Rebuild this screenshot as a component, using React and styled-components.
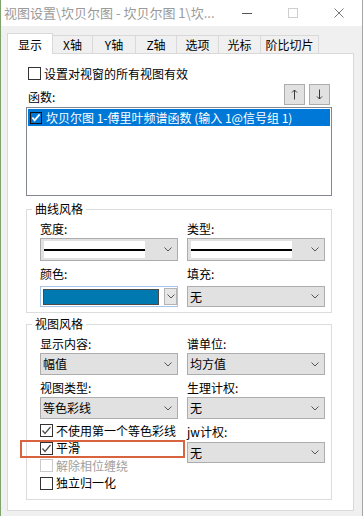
import React from "react";
import styled, { createGlobalStyle } from "styled-components";

const GlobalStyle = createGlobalStyle`
  html, body {
    margin: 0;
    padding: 0;
    background: #f0f0f0;
  }
  body {
    font-family: "Noto Sans CJK SC", "Noto Sans", sans-serif;
    font-size: 12px;
    color: #000;
  }
  * {
    box-sizing: border-box;
  }
`;

const Window = styled.div`
  width: 363px;
  height: 516px;
  display: flex;
  flex-direction: column;
  background: #f0f0f0;
  border-left: 1px solid #7da46c;
  border-right: 1px solid #a5a5a5;
  overflow: hidden;
`;

const TitleBar = styled.div`
  height: 26px;
  flex: none;
  display: flex;
  align-items: center;
  background: #fff;
`;

const Title = styled.div`
  flex: 1;
  min-width: 0;
  padding-left: 3px;
  font-size: 13px;
  line-height: 26px;
  color: #9a9a9a;
  white-space: nowrap;
`;

const CaptionButton = styled.div`
  width: 46px;
  height: 26px;
  flex: none;
  display: flex;
  align-items: center;
  justify-content: center;
`;

const Body = styled.div`
  flex: 1;
  display: flex;
  flex-direction: column;
  padding: 7px 8px 5px 6px;
`;

const TabRow = styled.div`
  height: 21px;
  display: flex;
  align-items: flex-end;
  position: relative;
  z-index: 1;
  margin-bottom: -1px;
`;

const Tab = styled.div`
  width: ${(p) => p.$w}px;
  height: ${(p) => (p.$active ? 21 : 19)}px;
  margin-left: ${(p) => (p.$first ? 0 : -1)}px;
  padding-top: ${(p) => (p.$active ? 3 : 1)}px;
  border: 1px solid #d9d9d9;
  border-bottom: ${(p) => (p.$active ? "none" : "1px solid #d9d9d9")};
  background: ${(p) => (p.$active ? "#fff" : "#f0f0f0")};
  line-height: 16px;
  text-align: center;
  white-space: nowrap;
  position: relative;
  z-index: ${(p) => (p.$active ? 2 : 1)};
`;

const Panel = styled.div`
  flex: 1;
  display: flex;
  flex-direction: column;
  background: #fff;
  border: 1px solid #d9d9d9;
  padding: 13px 21px 0 18px;
`;

const CheckRow = styled.div`
  height: ${(p) => p.$h || 13}px;
  display: flex;
  align-items: center;
  gap: 3px;
  padding-left: ${(p) => p.$indent || 0}px;
  line-height: 16px;
  white-space: nowrap;
  color: ${(p) => (p.$disabled ? "#a0a0a0" : "#000")};
  position: relative;
`;

const Highlight = styled.div`
  position: absolute;
  left: -20px;
  top: 0;
  width: 165px;
  height: 18px;
  border: 2px solid #d9623f;
  pointer-events: none;
`;

const Box = styled.span`
  width: 13px;
  height: 13px;
  flex: none;
  border: 1px solid ${(p) => (p.$disabled ? "#cacaca" : "#333")};
  background: #fff;
  display: flex;
  align-items: center;
  justify-content: center;
`;

const FuncRow = styled.div`
  margin-top: 4px;
  height: 21px;
  display: flex;
  align-items: flex-end;
  justify-content: space-between;
`;

const FuncLabel = styled.div`
  padding-left: 2px;
  line-height: 16px;
`;

const ArrowGroup = styled.div`
  display: flex;
  gap: 4px;
  margin-right: 2px;
  align-self: stretch;
`;

const SmallButton = styled.div`
  width: 21px;
  height: 21px;
  border: 1px solid #adadad;
  background: #e1e1e1;
  display: flex;
  align-items: center;
  justify-content: center;
`;

const ListBox = styled.div`
  margin-top: 2px;
  height: 89px;
  border: 1px solid #828790;
  padding: 1px;
`;

const ListItem = styled.div`
  height: 17px;
  display: flex;
  align-items: center;
  gap: 4px;
  padding-left: 2px;
  background: #0078d7;
  color: #fff;
  line-height: 16px;
  white-space: nowrap;
`;

const ListCheck = styled.span`
  width: 12px;
  height: 12px;
  flex: none;
  border: 1.5px solid #101010;
  display: flex;
  align-items: center;
  justify-content: center;
`;

const Group = styled.fieldset`
  margin: ${(p) => p.$top}px 0 0;
  border: 1px solid #dcdcdc;
  padding: 4px 6px ${(p) => p.$bottom}px 13px;
  min-width: 0;
`;

const Legend = styled.legend`
  padding: 0 3px;
  margin-left: -8px;
  line-height: 16px;
  font-size: 12px;
`;

const Grid = styled.div`
  display: grid;
  grid-template-columns: 138px 138px;
  column-gap: 9px;
  row-gap: 5px;
`;

const Field = styled.div`
  display: flex;
  flex-direction: column;
`;

const FieldLabel = styled.div`
  line-height: 16px;
  height: 16px;
  margin-top: ${(p) => p.$top || 0}px;
  margin-bottom: ${(p) => p.$gap}px;
  white-space: nowrap;
`;

const Combo = styled.div`
  height: ${(p) => p.$h}px;
  display: flex;
  align-items: center;
  border: 1px solid ${(p) => (p.$focus ? "#a7c4e8" : "#adadad")};
  background: ${(p) => (p.$focus ? "#fff" : "#e1e1e1")};
  padding-left: 2px;
  line-height: 16px;
`;

const ComboText = styled.span`
  flex: 1;
  white-space: nowrap;
`;

const LinePreview = styled.div`
  width: 101px;
  height: 17px;
  background: #fff;
  display: flex;
  align-items: center;
  margin-left: 1px;

  &::before {
    content: "";
    display: block;
    width: 100%;
    height: 2px;
    background: #000;
  }
`;

const Swatch = styled.div`
  width: 116px;
  height: 16px;
  border: 1px solid #4a4a4a;
  background: ${(p) => p.$color};
`;

const DropButton = styled.div`
  width: 13px;
  height: 17px;
  margin-left: auto;
  border: 1px solid #b4b4b4;
  background: #e6e6e6;
  display: flex;
  align-items: center;
  justify-content: center;
`;

const ChevronWrap = styled.span`
  margin-left: auto;
  margin-right: 5px;
  display: flex;
  align-items: center;
`;

const BottomSection = styled.div`
  margin-top: 3px;
  display: grid;
  grid-template-columns: 138px 138px;
  column-gap: 9px;
`;

const CheckColumn = styled.div`
  display: flex;
  flex-direction: column;
`;

const Chevron = () => (
  <svg width="8" height="5" viewBox="0 0 8 5">
    <polyline points="0.5,0.5 4,4 7.5,0.5" fill="none" stroke="#555" strokeWidth="1" />
  </svg>
);

const Check = ({ color = "#4a4a4a", width = 1.2 }) => (
  <svg width="11" height="11" viewBox="0 0 11 11">
    <polyline points="1.5,5.5 4,8.5 9.5,2" fill="none" stroke={color} strokeWidth={width} />
  </svg>
);

const Arrow = ({ down }) => (
  <svg width="7" height="11" viewBox="0 0 7 11">
    <g transform={down ? "rotate(180 3.5 5.5)" : undefined} fill="none" stroke="#3a3a3a" strokeWidth="1">
      <line x1="3.5" y1="1" x2="3.5" y2="10.5" />
      <polyline points="1,3.5 3.5,1 6,3.5" />
    </g>
  </svg>
);

const tabs = [
  { label: "显示", w: 46 },
  { label: "X轴", w: 41 },
  { label: "Y轴", w: 44 },
  { label: "Z轴", w: 42 },
  { label: "选项", w: 43 },
  { label: "光标", w: 43 },
  { label: "阶比切片", w: 59 },
];

const CheckBox = ({ checked, disabled, children, highlight }) => (
  <CheckRow $h={17.5} $disabled={disabled}>
    <Box $disabled={disabled}>{checked && <Check />}</Box>
    {children}
    {highlight && <Highlight />}
  </CheckRow>
);

const SelectField = ({ label, value, gap = 1, h = 22 }) => (
  <Field>
    <FieldLabel $gap={gap}>{label}</FieldLabel>
    <Combo $h={h}>
      <ComboText>{value}</ComboText>
      <ChevronWrap>
        <Chevron />
      </ChevronWrap>
    </Combo>
  </Field>
);

export default function App() {
  return (
    <>
      <GlobalStyle />
      <Window>
        <TitleBar>
          <Title>{"视图设置\\坎贝尔图 - 坎贝尔图 1\\坎..."}</Title>
          <CaptionButton>
            <svg width="10" height="10" viewBox="0 0 10 10">
              <line x1="0" y1="5.5" x2="10" y2="5.5" stroke="#555" strokeWidth="1" />
            </svg>
          </CaptionButton>
          <CaptionButton>
            <svg width="10" height="10" viewBox="0 0 10 10">
              <rect x="0.5" y="0.5" width="9" height="9" fill="none" stroke="#cfcfcf" strokeWidth="1" />
            </svg>
          </CaptionButton>
          <CaptionButton>
            <svg width="10" height="10" viewBox="0 0 10 10">
              <path d="M0.5 0.5 L9.5 9.5 M9.5 0.5 L0.5 9.5" fill="none" stroke="#777" strokeWidth="1" />
            </svg>
          </CaptionButton>
        </TitleBar>
        <Body>
          <TabRow>
            {tabs.map((t, i) => (
              <Tab key={t.label} $w={t.w} $first={i === 0} $active={i === 0}>
                {t.label}
              </Tab>
            ))}
          </TabRow>
          <Panel>
            <CheckRow $indent={2}>
              <Box />
              设置对视窗的所有视图有效
            </CheckRow>
            <FuncRow>
              <FuncLabel>函数:</FuncLabel>
              <ArrowGroup>
                <SmallButton>
                  <Arrow />
                </SmallButton>
                <SmallButton>
                  <Arrow down />
                </SmallButton>
              </ArrowGroup>
            </FuncRow>
            <ListBox>
              <ListItem>
                <ListCheck>
                  <Check color="#fff" width={2} />
                </ListCheck>
                坎贝尔图 1-傅里叶频谱函数 (输入 1@信号组 1)
              </ListItem>
            </ListBox>

            <Group $top={5} $bottom={5}>
              <Legend>曲线风格</Legend>
              <Grid>
                <Field>
                  <FieldLabel $gap={1}>宽度:</FieldLabel>
                  <Combo $h={23}>
                    <LinePreview />
                    <ChevronWrap>
                      <Chevron />
                    </ChevronWrap>
                  </Combo>
                </Field>
                <Field>
                  <FieldLabel $gap={1}>类型:</FieldLabel>
                  <Combo $h={23}>
                    <LinePreview />
                    <ChevronWrap>
                      <Chevron />
                    </ChevronWrap>
                  </Combo>
                </Field>
                <Field>
                  <FieldLabel $gap={4}>颜色:</FieldLabel>
                  <Combo $h={21} $focus>
                    <Swatch $color="#0078b0" />
                    <DropButton>
                      <Chevron />
                    </DropButton>
                  </Combo>
                </Field>
                <SelectField label="填充:" value="无" gap={4} h={21} />
              </Grid>
            </Group>

            <Group $top={3} $bottom={7}>
              <Legend>视图风格</Legend>
              <Grid>
                <SelectField label="显示内容:" value="幅值" />
                <SelectField label="谱单位:" value="均方值" />
                <SelectField label="视图类型:" value="等色彩线" />
                <SelectField label="生理计权:" value="无" />
              </Grid>
              <BottomSection>
                <CheckColumn>
                  <CheckBox checked>不使用第一个等色彩线</CheckBox>
                  <CheckBox checked highlight>
                    平滑
                  </CheckBox>
                  <CheckBox disabled>解除相位缠绕</CheckBox>
                  <CheckBox>独立归一化</CheckBox>
                </CheckColumn>
                <Field>
                  <FieldLabel $top={2} $gap={2}>
                    jw计权:
                  </FieldLabel>
                  <Combo $h={21}>
                    <ComboText>无</ComboText>
                    <ChevronWrap>
                      <Chevron />
                    </ChevronWrap>
                  </Combo>
                </Field>
              </BottomSection>
            </Group>
          </Panel>
        </Body>
      </Window>
    </>
  );
}
